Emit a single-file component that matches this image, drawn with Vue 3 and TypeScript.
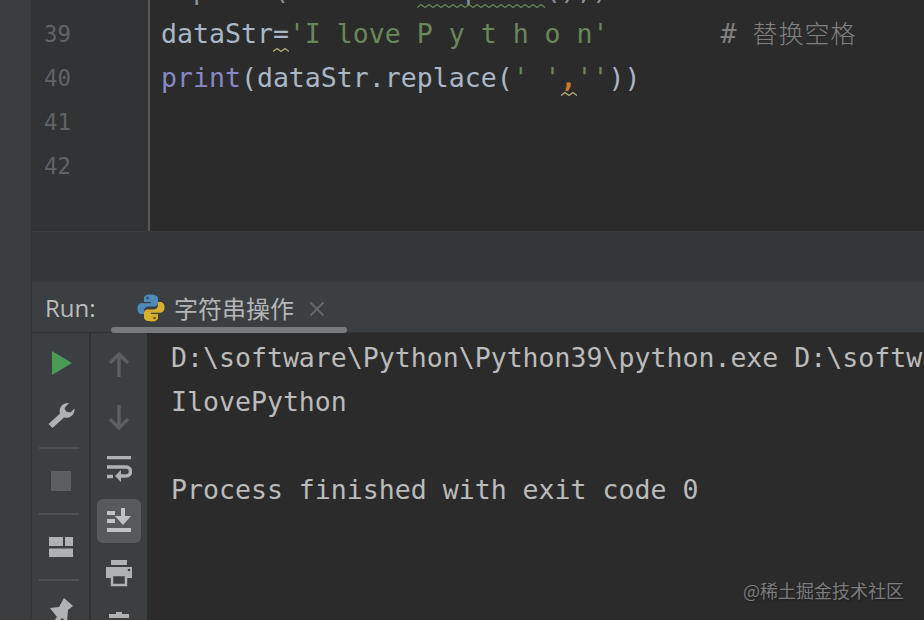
<script setup lang="ts">
const lineNumbers: string[] = ['38', '39', '40', '41', '42']
const consoleLines: string[] = [
  'D:\\software\\Python\\Python39\\python.exe D:\\software\\Python\\Python39\\demo.py',
  'IlovePython',
  ' ',
  'Process finished with exit code 0',
]
const commentPrefix: string = '       # '
</script>

<template>
  <div class="ide">
    <div class="strip"></div>
    <div class="main">
      <section class="editor">
        <div class="gutter">
          <div v-for="n in lineNumbers" :key="n" class="num">{{ n }}</div>
        </div>
        <div class="code">
          <div class="line dim">Deplete(nnnnnnnnnnnpnnnn(),)<svg class="wave w1" width="130" height="6" viewBox="0 0 130 6"><path d="M0 4.5 L4 1.5 L8 4.5 L12 1.5 L16 4.5 L20 1.5 L24 4.5 L28 1.5 L32 4.5 L36 1.5 L40 4.5 L44 1.5 L48 4.5 L52 1.5 L56 4.5 L60 1.5 L64 4.5 L68 1.5 L72 4.5 L76 1.5 L80 4.5 L84 1.5 L88 4.5 L92 1.5 L96 4.5 L100 1.5 L104 4.5 L108 1.5 L112 4.5 L116 1.5 L120 4.5 L124 1.5 L128 4.5" fill="none" stroke="#6a8759" stroke-width="1.2"/></svg></div>
          <div class="line">dataStr=<span class="str">'I love P y t h o n'</span><span class="comment">{{ commentPrefix }}<span class="cjk">替换空格</span></span><svg class="wave w2" width="16" height="6" viewBox="0 0 16 6"><path d="M0 4.5 L4 1.5 L8 4.5 L12 1.5 L16 4.5" fill="none" stroke="#b8b07a" stroke-width="1.2"/></svg></div>
          <div class="line"><span class="builtin">print</span>(dataStr.replace(<span class="str">' '</span><span class="comma">,</span><span class="str">''</span>))<svg class="wave w3" width="16" height="6" viewBox="0 0 16 6"><path d="M0 4.5 L4 1.5 L8 4.5 L12 1.5 L16 4.5" fill="none" stroke="#b8b07a" stroke-width="1.2"/></svg></div>
        </div>
      </section>

      <div class="band"></div>

      <section class="panel">
        <header class="tabs">
          <span class="run">Run:</span>
          <svg class="py" width="30" height="30" viewBox="0 0 30 30">
            <path d="M14.5 1.5c-5 0-6.5 1.8-6.5 4.2V9h7v1.3H5.6C3 10.300 1.500 12.300 1.500 15.500S3 21 5.600 21H8v-3.200c0-2.600 2-4.300 4.500-4.300h6c2 0 3.500-1.500 3.500-3.500V5.700c0-2.400-2.500-4.200-7.500-4.200z" fill="#4f8bb8"/>
            <path d="M15.500 28.500c5 0 6.500-1.800 6.500-4.200V21h-7v-1.300h9.400c2.600 0 4.100-2 4.100-5.200S27 9 24.400 9H22v3.200c0 2.600-2 4.300-4.500 4.300h-6c-2 0-3.500 1.500-3.500 3.500v4.300c0 2.400 2.500 4.200 7.500 4.200z" fill="#d9b02c"/>
            <circle cx="11.500" cy="5" r="1.300" fill="#2f4f66"/>
            <circle cx="18.500" cy="25" r="1.300" fill="#6b5614"/>
          </svg>
          <span class="tab-name">字符串操作</span>
          <svg class="close" width="16" height="16" viewBox="0 0 16 16"><path d="M1.500 1.500 L14.500 14.500 M14.500 1.500 L1.500 14.500" stroke="#66686a" stroke-width="1.800"/></svg>
          <div class="thumb"></div>
        </header>

        <div class="body">
          <aside class="tools first">
            <button class="tool">
              <svg width="24" height="26" viewBox="0 0 24 26"><path d="M3 1 L23 13 L3 25 Z" fill="#499c54"/></svg>
            </button>
            <button class="tool">
              <svg width="30" height="30" viewBox="0 0 30 30"><path d="M2.500 24 L14 13.500 C12.500 8.500 16 2.500 23 3 L18.500 8 L20 11.500 L24.500 12.500 L28.500 8.500 C29 15 23.500 19 18 17.500 L6.500 28 Z" fill="#afb1b3"/></svg>
            </button>
            <div class="sep"></div>
            <button class="tool">
              <svg width="22" height="22" viewBox="0 0 22 22"><rect x="1" y="1" width="20" height="20" fill="#5c5e60"/></svg>
            </button>
            <div class="sep"></div>
            <button class="tool">
              <svg width="26" height="22" viewBox="0 0 26 22"><path d="M1 1h14v9H1zM17 1h8v9h-8zM1 12.500h24V21H1z" fill="#afb1b3"/></svg>
            </button>
            <div class="sep"></div>
            <button class="tool">
              <svg width="28" height="30" viewBox="0 0 28 30"><path d="M17 0 L26 8 L21 12 L20 24 L15 20 L6 30 L3 28 L10 19 L3 10 L12 9 Z" fill="#afb1b3"/></svg>
            </button>
          </aside>

          <aside class="tools second">
            <button class="tool">
              <svg width="22" height="26" viewBox="0 0 22 26"><path d="M2 11 L11 2 L20 11 M11 2 V25" fill="none" stroke="#5c5e60" stroke-width="3.500"/></svg>
            </button>
            <button class="tool">
              <svg width="22" height="26" viewBox="0 0 22 26"><path d="M2 15 L11 24 L20 15 M11 24 V1" fill="none" stroke="#5c5e60" stroke-width="3.500"/></svg>
            </button>
            <button class="tool">
              <svg width="26" height="26" viewBox="0 0 26 26"><path d="M1 1.500 H25 M1 11 H20 C26 11 26 20 20 20 H13 M1 20.500 H7" fill="none" stroke="#afb1b3" stroke-width="3.500"/><path d="M15 14 L9 20 L15 26 Z" fill="#afb1b3"/></svg>
            </button>
            <button class="tool active">
              <svg width="26" height="26" viewBox="0 0 26 26"><path d="M1 3h8v4H1zM1 11h8v4H1zM1 20h24v4H1zM15 0h4v8h6l-8 9-8-9h6z" fill="#c0c2c4"/></svg>
            </button>
            <button class="tool">
              <svg width="28" height="28" viewBox="0 0 28 28"><path d="M6 1h16v5H6zM1 8h26v11H1z" fill="#afb1b3"/><path d="M7 16h14v10H7z" fill="#3c3f41" stroke="#afb1b3" stroke-width="2.500"/><circle cx="24" cy="11" r="1.300" fill="#3c3f41"/></svg>
            </button>
            <button class="tool">
              <svg width="22" height="26" viewBox="0 0 22 26"><path d="M8 0h6v2h7v4H1V2h7zM3 8h16v18H3z" fill="#afb1b3"/></svg>
            </button>
          </aside>

          <div class="console">
            <div v-for="(text, i) in consoleLines" :key="i" class="out">{{ text }}</div>
            <div class="mark">@稀土掘金技术社区</div>
          </div>
        </div>
      </section>
    </div>
  </div>
</template>

<style>
html, body { margin: 0; background: #2b2b2b; overflow: hidden; }
</style>

<style scoped>
.ide {
  width: 924px;
  height: 620px;
  display: flex;
  overflow: hidden;
  background: #2b2b2b;
  font-family: "DejaVu Sans Mono", "Noto Sans CJK SC", monospace;
}
.strip {
  width: 31px;
  flex: none;
  background: #3a3c3e;
  border-right: 1px solid #333537;
}
.main {
  flex: 1;
  min-width: 0;
  display: flex;
  flex-direction: column;
}
.editor {
  height: 231px;
  flex: none;
  display: flex;
  overflow: hidden;
  background: #2b2b2b;
}
.gutter {
  width: 118px;
  flex: none;
  box-sizing: border-box;
  margin-top: -32px;
  padding-left: 12px;
  background: #313335;
  border-right: 2px solid #555759;
  height: 263px;
}
.num {
  height: 44px;
  line-height: 44px;
  font-size: 22.4px;
  color: #606366;
}
.code {
  margin-top: -32px;
  padding-left: 11px;
  flex: 1;
  min-width: 0;
}
.line {
  position: relative;
  height: 44px;
  line-height: 44px;
  font-size: 26.56px;
  color: #a9b7c6;
  white-space: pre;
}
.line.dim { color: #8a959f; }
.str { color: #6a8759; }
.builtin { color: #8888c6; }
.comment { color: #808080; }
.cjk {
  font-family: "Noto Sans CJK SC", sans-serif;
  font-size: 25px;
  font-weight: 300;
  line-height: 1;
  letter-spacing: 1px;
}
.comma { color: #cc7832; font-weight: 700; }
.wave { position: absolute; display: block; }
.w1 { left: 256px; top: 35px; }
.w2 { left: 112px; top: 35px; }
.w3 { left: 400px; top: 35px; }
.band {
  height: 51px;
  flex: none;
  background: #343638;
  border-top: 1px solid #3a3c3e;
  box-sizing: border-box;
}
.panel {
  flex: 1;
  min-height: 0;
  display: flex;
  flex-direction: column;
  background: #3c3f41;
}
.tabs {
  position: relative;
  height: 51px;
  flex: none;
  display: flex;
  align-items: center;
  box-sizing: border-box;
  padding-left: 13px;
  border-bottom: 1px solid #323232;
  background: #3c3f41;
}
.run {
  font-family: "Open Sans", sans-serif;
  font-size: 24px;
  color: #bbbbbb;
  width: 91px;
}
.py { flex: none; margin-top: 1px; }
.tab-name {
  margin-left: 8px;
  font-family: "Noto Sans CJK SC", sans-serif;
  font-size: 24px;
  color: #b4b6b8;
}
.close { margin: 3px 0 0 15px; flex: none; }
.thumb {
  position: absolute;
  left: 79px;
  bottom: -1px;
  width: 236px;
  height: 6px;
  border-radius: 3px;
  background: #77797b;
}
.body {
  flex: 1;
  min-height: 0;
  display: flex;
  overflow: hidden;
}
.tools {
  flex: none;
  display: flex;
  flex-direction: column;
  align-items: center;
  box-sizing: border-box;
  background: #3c3f41;
  gap: 8px;
}
.first {
  width: 59px;
  padding-top: 8px;
  border-right: 2px solid #323232;
}
.first .tool { padding-left: 1px; }
.second {
  width: 56px;
  padding-top: 10px;
}
.tool {
  width: 44px;
  height: 44px;
  flex: none;
  display: flex;
  align-items: center;
  justify-content: center;
  padding: 0;
  border: 0;
  border-radius: 6px;
  background: transparent;
}
.tool.active { background: #575a5c; }
.sep {
  width: 40px;
  height: 2px;
  flex: none;
  margin: 2px 3px 2px 0;
  background: #4e5052;
}
.console {
  position: relative;
  flex: 1;
  min-width: 0;
  padding: 3px 0 0 24px;
  background: #2b2b2b;
  overflow: hidden;
}
.out {
  height: 44px;
  line-height: 44px;
  font-size: 26.56px;
  color: #bbbbbb;
  white-space: pre;
}
.mark {
  position: absolute;
  right: 20px;
  bottom: 18px;
  font-family: "Noto Sans CJK SC", sans-serif;
  font-size: 18px;
  line-height: 24px;
  color: #7c7c7c;
  text-shadow: 1px 1px 2px #1c1c1c;
}
</style>
